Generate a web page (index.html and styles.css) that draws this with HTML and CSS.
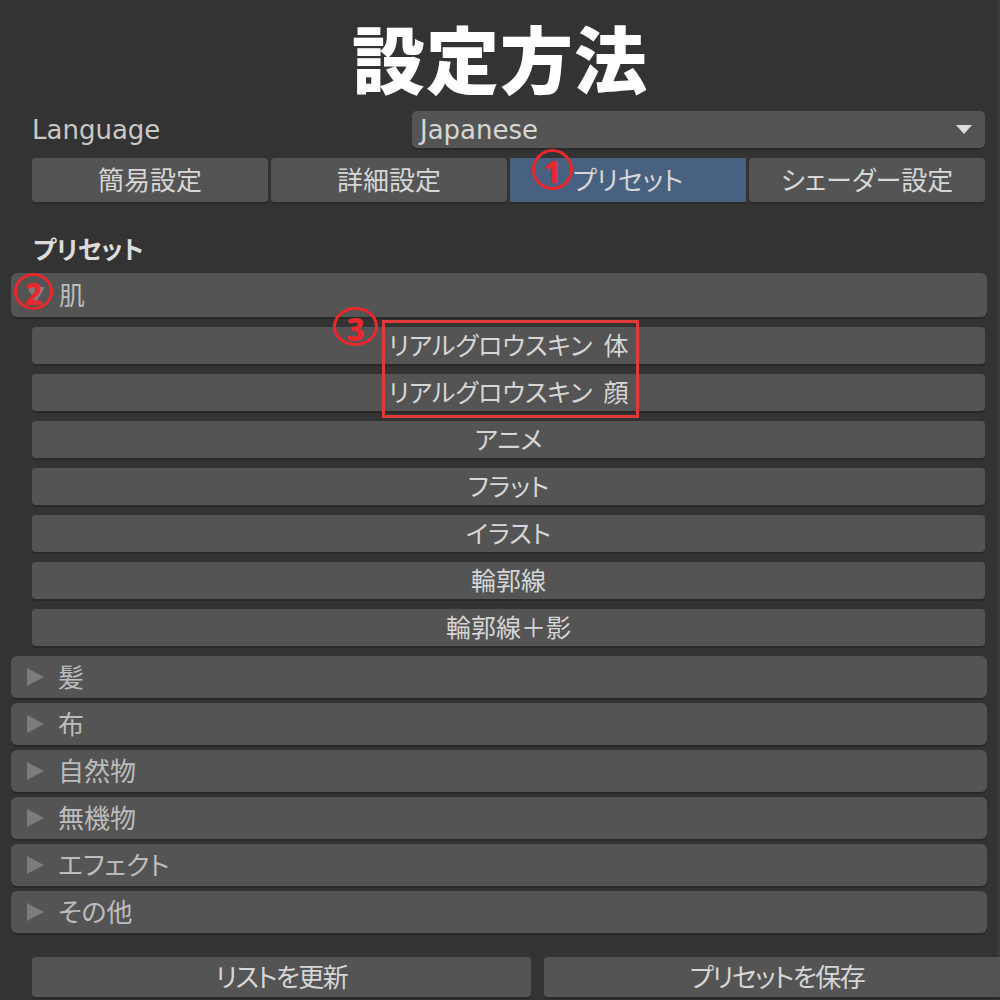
FILE: index.html
```html
<!DOCTYPE html>
<html lang="ja">
<head>
    <meta charset="UTF-8">
    <title>設定方法</title>
    <link rel="stylesheet" href="styles.css">
</head>
<body>
    <div class="page">
        <h1 class="title">設定方法</h1>

        <div class="lang-row">
            <span class="lang-label">Language</span>
            <div class="dropdown">
                <span>Japanese</span>
                <span class="dropdown-arrow"></span>
            </div>
        </div>

        <div class="tabs">
            <div class="tab">簡易設定</div>
            <div class="tab">詳細設定</div>
            <div class="tab active">プリセット</div>
            <div class="tab">シェーダー設定</div>
        </div>

        <div class="section-label">プリセット</div>

        <div class="panel-header open"><span class="arrow"></span>肌</div>
        <div class="sub-list">
            <div class="sub-btn">リアルグロウスキン&nbsp;&nbsp;体</div>
            <div class="sub-btn">リアルグロウスキン&nbsp;&nbsp;顔</div>
            <div class="sub-btn">アニメ</div>
            <div class="sub-btn">フラット</div>
            <div class="sub-btn">イラスト</div>
            <div class="sub-btn">輪郭線</div>
            <div class="sub-btn">輪郭線＋影</div>
        </div>

        <div class="panel-list">
            <div class="panel-header"><span class="arrow"></span>髪</div>
            <div class="panel-header"><span class="arrow"></span>布</div>
            <div class="panel-header"><span class="arrow"></span>自然物</div>
            <div class="panel-header"><span class="arrow"></span>無機物</div>
            <div class="panel-header"><span class="arrow"></span>エフェクト</div>
            <div class="panel-header"><span class="arrow"></span>その他</div>
        </div>

        <div class="bottom-row">
            <div class="bottom-btn">リストを更新</div>
            <div class="bottom-btn">プリセットを保存</div>
        </div>

        <!-- annotations -->
        <div class="mark mark-1">1</div>
        <div class="mark mark-2">2</div>
        <div class="mark mark-3">3</div>
        <div class="red-box"></div>
    </div>
</body>
</html>
```

FILE: styles.css
```css
:root {
    --bg: #333333;
    --btn: #545454;
    --btn-shadow: #292929;
    --text: #d6d6d6;
    --text-dim: #bcbcbc;
    --active: #486181;
    --red: #e8282c;
}

* {
    margin: 0;
    padding: 0;
    box-sizing: border-box;
}

body {
    background: var(--bg);
    font-family: "DejaVu Sans", "Noto Sans CJK JP", sans-serif;
    color: var(--text);
}

.page {
    position: relative;
    width: 1000px;
    height: 1000px;
    overflow: hidden;
    box-shadow: inset -3px 0 #3b3b3b;
}

.title {
    height: 111px;
    padding-top: 8px;
    text-align: center;
    font-family: "Noto Sans CJK JP", sans-serif;
    font-weight: 900;
    font-size: 73px;
    line-height: 96px;
    color: #fff;
    letter-spacing: 1px;
}

.lang-row {
    display: flex;
    align-items: center;
    height: 37px;
    margin: 0 15px 0 32px;
}

.lang-label {
    width: 380px;
    font-size: 26px;
    color: #c8c8c8;
}

.dropdown {
    flex: 1;
    height: 37px;
    display: flex;
    align-items: center;
    justify-content: space-between;
    padding: 0 13px 0 8px;
    background: var(--btn);
    border-radius: 5px;
    box-shadow: 0 2px 0 var(--btn-shadow);
    font-size: 26px;
}

.dropdown-arrow {
    width: 0;
    height: 0;
    border-left: 8px solid transparent;
    border-right: 8px solid transparent;
    border-top: 9px solid #dedede;
}

.tabs {
    display: flex;
    gap: 3px;
    height: 44px;
    margin: 10px 15px 0 32px;
}

.tab {
    flex: 1;
    display: flex;
    align-items: center;
    justify-content: center;
    padding-bottom: 4px;
    background: var(--btn);
    border-radius: 4px;
    box-shadow: 0 2px 0 var(--btn-shadow);
    font-family: "Noto Sans CJK JP", sans-serif;
    font-feature-settings: "palt";
    font-size: 26px;
    color: var(--text);
}

.tab.active {
    background: var(--active);
    border-radius: 0;
}

.section-label {
    margin: 31px 0 10px 33px;
    line-height: 30px;
    font-family: "Noto Sans CJK JP", sans-serif;
    font-feature-settings: "palt";
    font-weight: 700;
    font-size: 25px;
    color: #dcdcdc;
}

.panel-header {
    display: flex;
    align-items: center;
    height: 42px;
    margin: 0 13px 0 11px;
    padding: 0 0 3px 16px;
    background: var(--btn);
    border-radius: 6px;
    box-shadow: 0 2px 0 var(--btn-shadow);
    font-family: "Noto Sans CJK JP", sans-serif;
    font-feature-settings: "palt";
    font-size: 26px;
    color: var(--text-dim);
}

.panel-header.open {
    height: 44px;
}

.arrow {
    width: 0;
    height: 0;
    margin: 3px 14px 0 0;
    border-top: 9px solid transparent;
    border-bottom: 9px solid transparent;
    border-left: 17px solid #7c7c7c;
}

.panel-header.open .arrow {
    border-left: 9px solid transparent;
    border-right: 9px solid transparent;
    border-top: 16px solid #7c7c7c;
    border-bottom: 0;
}

.sub-list {
    display: flex;
    flex-direction: column;
    gap: 10px;
    margin: 10px 15px 0 32px;
}

.sub-btn {
    height: 37px;
    display: flex;
    align-items: center;
    justify-content: center;
    padding-bottom: 3px;
    background: var(--btn);
    border-radius: 4px;
    box-shadow: 0 2px 0 var(--btn-shadow);
    font-family: "Noto Sans CJK JP", sans-serif;
    font-feature-settings: "palt";
    font-size: 25px;
    color: var(--text);
}

.panel-list {
    display: flex;
    flex-direction: column;
    gap: 5px;
    margin-top: 10px;
}

.bottom-row {
    display: grid;
    grid-template-columns: 499px 1fr;
    gap: 13px;
    height: 38px;
    margin: 24px -10px 0 32px;
}

.bottom-btn {
    display: flex;
    align-items: center;
    justify-content: center;
    padding-bottom: 3px;
    background: var(--btn);
    border-radius: 4px;
    box-shadow: 0 2px 0 var(--btn-shadow);
    font-family: "Noto Sans CJK JP", sans-serif;
    font-feature-settings: "palt";
    font-size: 26px;
    letter-spacing: -1.5px;
    color: var(--text);
}

/* red annotation marks over the screenshot */
.mark {
    position: absolute;
    display: flex;
    align-items: center;
    justify-content: center;
    padding-top: 4px;
    border: 3px solid var(--red);
    border-radius: 50%;
    font-family: "Noto Sans", sans-serif;
    font-weight: 800;
    line-height: 1;
    color: var(--red);
}

.mark-1 {
    left: 532px;
    top: 149px;
    width: 41px;
    height: 41px;
    font-size: 30px;
}

.mark-2 {
    left: 14px;
    top: 273px;
    width: 39px;
    height: 37px;
    font-size: 30px;
}

.mark-3 {
    left: 333px;
    top: 307px;
    width: 45px;
    height: 39px;
    font-size: 32px;
}

.red-box {
    position: absolute;
    left: 382px;
    top: 320px;
    width: 257px;
    height: 98px;
    border: 3px solid #e23a3a;
}
```
